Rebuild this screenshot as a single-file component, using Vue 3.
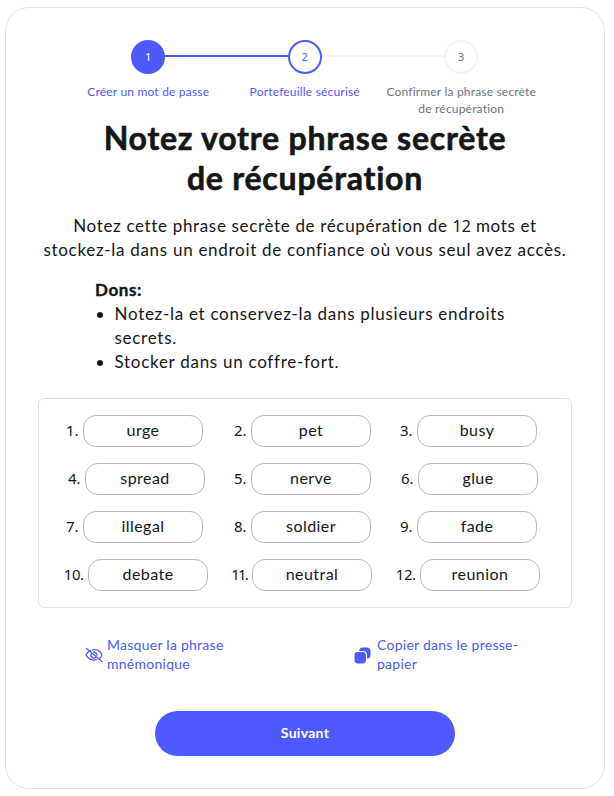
<script setup>
const steps = [
  { label: ['Créer un mot de passe'], state: 'done' },
  { label: ['Portefeuille sécurisé'], state: 'current' },
  { label: ['Confirmer la phrase secrète', 'de récupération'], state: 'todo' },
]

const words = [
  { text: 'urge', room: 16 },
  { text: 'pet', room: 18.7 },
  { text: 'busy', room: 17.4 },
  { text: 'spread', room: 20 },
  { text: 'nerve', room: 18.7 },
  { text: 'glue', room: 19.4 },
  { text: 'illegal', room: 16 },
  { text: 'soldier', room: 18.7 },
  { text: 'fade', room: 17.4 },
  { text: 'debate', room: 26 },
  { text: 'neutral', room: 20.7 },
  { text: 'reunion', room: 23.4 },
]
</script>

<template>
  <main class="card">
    <ol class="steps">
      <li v-for="(s, i) in steps" :key="i" class="step" :class="s.state">
        <div class="track">
          <i class="line" :class="{ hidden: i === 0, on: i === 1 }"></i>
          <span class="dot">{{ i + 1 }}</span>
          <i class="line" :class="{ hidden: i === 2, on: i === 0 }"></i>
        </div>
        <div class="step-label">
          <div v-for="l in s.label" :key="l">{{ l }}</div>
        </div>
      </li>
    </ol>

    <h1>Notez votre phrase secrète<br />de récupération</h1>
    <p class="intro">
      <span class="lead">Notez cette phrase secrète de récupération de <span class="count">12</span> mots et</span><br />
      stockez-la dans un endroit de confiance où vous seul avez accès.
    </p>

    <section class="tips">
      <strong>Dons:</strong>
      <ul>
        <li>Notez-la et conservez-la dans plusieurs endroits<br />secrets.</li>
        <li>Stocker dans un coffre-fort.</li>
      </ul>
    </section>

    <section class="phrase">
      <div v-for="(w, i) in words" :key="w.text" class="word">
        <span class="index" :class="{ wide: i > 8, narrow: i === 10 }" :style="{ width: w.room + 'px' }">{{ i + 1 }}.</span>
        <span class="chip">{{ w.text }}</span>
      </div>
    </section>

    <div class="actions">
      <a class="action hide">
        <svg width="18" height="16" viewBox="0 0 18 16" fill="none" stroke="currentColor" stroke-width="1.250" stroke-linecap="round">
          <path d="M5.600 3.400C3.600 4.200 2 5.800 1.300 7.300Q1 8 1.400 8.700C3 11.300 5.800 13 9 13Q10.500 13 11.900 12.500" />
          <path d="M7.400 2.900C11.600 2.100 15.100 4.200 16.700 7.300Q17 8 16.600 8.700Q15.700 10.300 14.300 11.400" />
          <path d="M6.400 6.500A3 3 0 0 0 10.600 10.600M8.600 5.100A3 3 0 0 1 11.900 8.300" />
          <path d="M1.500 1.500 17 14.500" />
        </svg>
        <span>Masquer la phrase<br />mnémonique</span>
      </a>
      <a class="action copy">
        <svg width="17" height="17" viewBox="0 0 17 17" fill="currentColor">
          <rect x="0.500" y="5" width="11.500" height="11.500" rx="3.400" />
          <path d="M8.500 0.500H13Q16.500 0.500 16.500 4V8.200Q16.500 11.500 13 11.600V8.200Q13 4 8.800 4H5.200Q5.300 0.500 8.500 0.500Z" />
        </svg>
        <span>Copier dans le presse-<br />papier</span>
      </a>
    </div>

    <button class="next">Suivant</button>
  </main>
</template>

<style>
body {
  background: #fff;
}
</style>

<style scoped>
.card {
  box-sizing: border-box;
  width: 600px;
  height: 782px;
  margin: 7px 0 0 5px;
  padding: 32px;
  border: 1px solid #dfe1e5;
  border-radius: 24px;
  color: #141618;
  font: 16px/24px Lato, 'Noto Sans', sans-serif;
  letter-spacing: 0.45px;
  display: flex;
  flex-direction: column;
  white-space: nowrap;
}
.steps {
  list-style: none;
  margin: 0 31px 0 32px;
  padding: 0;
  height: 78px;
  display: grid;
  grid-template-columns: repeat(3, 156.5px);
}
.step {
  color: #4d5aff;
  text-align: center;
}
.track {
  display: flex;
  align-items: center;
}
.line {
  flex: 1;
  height: 2px;
  margin-bottom: 2px;
  background: #f2f3f9;
}
.line.on {
  background: #4d5aff;
}
.line.hidden {
  visibility: hidden;
}
.dot {
  box-sizing: border-box;
  width: 34px;
  height: 34px;
  border: 2px solid #4d5aff;
  border-radius: 50%;
  font-family: 'Noto Sans', sans-serif;
  font-size: 11px;
  line-height: 30px;
  letter-spacing: 0;
}
.done .dot {
  background: #4d5aff;
  color: #fff;
}
.todo {
  color: #6a737d;
}
.todo .dot {
  border-color: #f2f3f9;
}
.step-label {
  margin-top: 9px;
  font-size: 12px;
  line-height: 17px;
  letter-spacing: 0.19px;
  display: flex;
  flex-direction: column;
  align-items: center;
}
h1 {
  margin: 0;
  font-size: 32px;
  line-height: 40px;
  font-weight: 700;
  letter-spacing: 0.78px;
  -webkit-text-stroke: 0.6px currentColor;
  text-align: center;
}
.intro {
  margin: 16px 0 16px;
  font-size: 17px;
  letter-spacing: 0.71px;
  text-align: center;
}
.lead {
  letter-spacing: 0.66px;
}
.count {
  font-family: 'Noto Sans', sans-serif;
  font-size: 16px;
  line-height: 1;
  letter-spacing: 0;
}
.tips {
  margin-left: 57px;
  font-size: 17px;
  letter-spacing: 0.72px;
}
.tips strong {
  display: block;
  letter-spacing: 0.6px;
  -webkit-text-stroke: 0.4px currentColor;
}
.tips ul {
  margin: 0;
  padding-left: 19.500px;
}
.phrase {
  box-sizing: border-box;
  height: 210px;
  margin-top: 24px;
  padding: 16px 0 0 12.700px;
  border: 1px solid #dfe1e5;
  border-radius: 6px;
  display: grid;
  grid-template-columns: repeat(3, 166.670px);
  grid-auto-rows: 32px;
  row-gap: 16px;
}
.word {
  display: flex;
  justify-content: center;
}
.index {
  display: flex;
  justify-content: flex-end;
  box-sizing: border-box;
  padding-right: 4.500px;
  font-family: 'Noto Sans', sans-serif;
  font-size: 15px;
  line-height: 31px;
  letter-spacing: 0;
}
.index.wide {
  letter-spacing: -0.5px;
}
.index.narrow {
  letter-spacing: -1.8px;
  padding-right: 5px;
}
.chip {
  box-sizing: border-box;
  width: 120px;
  height: 32px;
  border: 1px solid #b7bbc8;
  border-radius: 13px;
  line-height: 28px;
  text-align: center;
}
.actions {
  display: flex;
  margin-top: 27px;
  color: #4d5aff;
  font-size: 14px;
  line-height: 19px;
  letter-spacing: 0.26px;
}
.action {
  display: flex;
  align-items: center;
}
.action svg {
  margin-top: 2px;
}
.hide {
  width: 269px;
  margin-left: 47px;
  gap: 4px;
}
.copy {
  gap: 6px;
}
.next {
  align-self: center;
  width: 300px;
  height: 45px;
  margin-top: 38px;
  padding: 0 0 1px;
  border: 0;
  border-radius: 23px;
  background: #4d5aff;
  color: #fff;
  font: 700 14px/20px Lato, sans-serif;
  letter-spacing: 0.3px;
}
</style>
